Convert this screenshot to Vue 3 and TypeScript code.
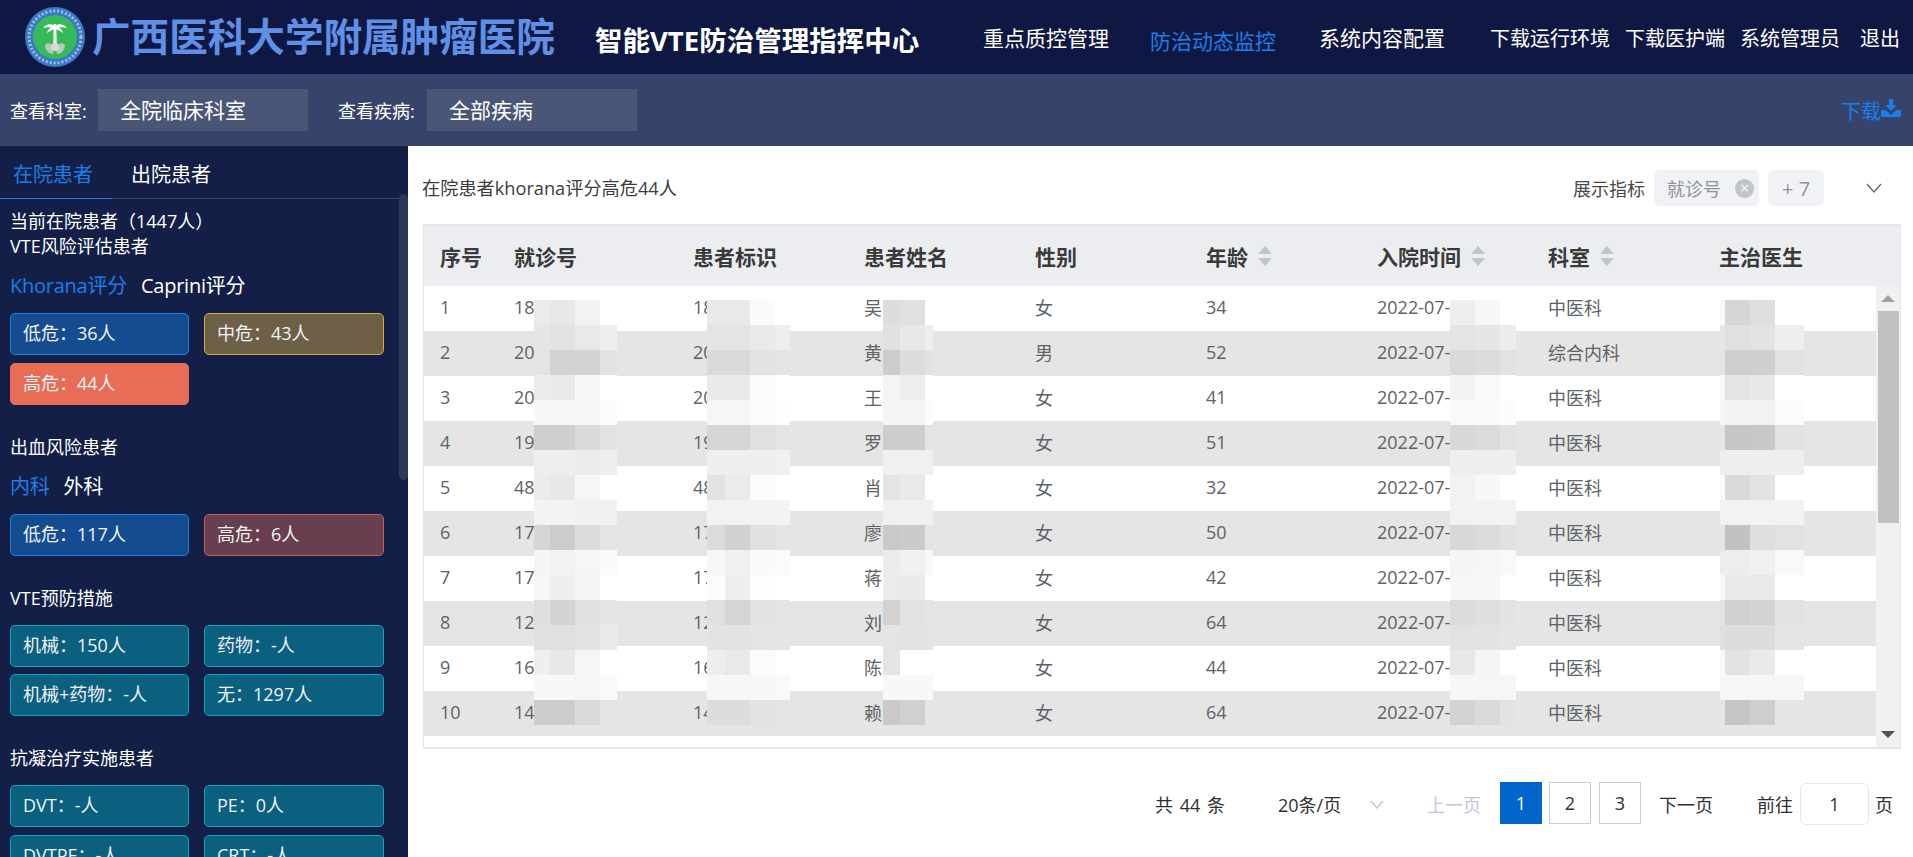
<script setup lang="ts">
interface Patient { no: string; id: string; name: string; sex: string; age: string; dept: string }
interface Mosaic { left: number; widths: number[]; data: string[] }

const patients: Patient[] = [
  { no: '18', id: '18', name: '吴', sex: '女', age: '34', dept: '中医科' },
  { no: '20', id: '20', name: '黄', sex: '男', age: '52', dept: '综合内科' },
  { no: '20', id: '20', name: '王', sex: '女', age: '41', dept: '中医科' },
  { no: '19', id: '19', name: '罗', sex: '女', age: '51', dept: '中医科' },
  { no: '48', id: '48', name: '肖', sex: '女', age: '32', dept: '中医科' },
  { no: '17', id: '17', name: '廖', sex: '女', age: '50', dept: '中医科' },
  { no: '17', id: '17', name: '蒋', sex: '女', age: '42', dept: '中医科' },
  { no: '12', id: '12', name: '刘', sex: '女', age: '64', dept: '中医科' },
  { no: '16', id: '16', name: '陈', sex: '女', age: '44', dept: '中医科' },
  { no: '14', id: '14', name: '赖', sex: '女', age: '64', dept: '中医科' },
]

const mosaics: Mosaic[] = [
  { left: 110, widths: [16, 25, 25, 17], data: ['eb e8 f2 ff','e6 e3 e9 ef','e4 d2 d4 e2','ec ea f8 ff','f8 f6 f8 fc','cf cf da e2','ee ee ec ee','ec e8 f6 ff','f3 f3 f1 f1','d6 cc dc e4','f5 f2 f6 fa','f6 ef f5 ff','de d4 e0 e6','e0 e0 e3 ea','ef e8 f6 ff','f8 f8 f6 f9','cc cc da e4'] },
  { left: 283, widths: [18, 25, 25, 15], data: ['e9 e9 fa ff','e4 e4 ea ee','da da e3 e4','ea ea fb ff','f6 f6 fb fd','d5 d5 e0 e4','ef ef ef f0','e2 eb fb ff','f2 f2 f2 f3','dc d1 e1 e5','f7 f0 fa fb','fb ee fd ff','e0 d5 e2 e5','e3 e3 e5 e5','ee e9 fb ff','f7 f7 f7 f9','dd dd e3 e5'] },
  { left: 459, widths: [17, 25, 8], data: ['dd e0 ff','e1 e8 ee','cd dd e1','f4 ee ff','f5 f5 fb','cd cd e4','f0 f0 f0','e4 e9 ff','f0 f0 f0','c9 cb e4','eb f0 f8','eb ea ff','d2 e2 e4','e4 e3 e4','e4 ff ff','f8 f8 f8','c9 d0 e5'] },
  { left: 1026, widths: [25, 25, 16], data: ['ee f7 ff','e4 e6 ec','da dc e2','f3 fa ff','f9 fa fc','d8 db e2','ef ef ef','f2 f8 ff','f2 f2 f2','d8 dc e1','f5 f6 f9','f8 f8 ff','dc de e3','e2 e3 e5','e8 f5 ff','f6 f6 f6','d2 da e3'] },
  { left: 1296, widths: [5, 25, 25, 29], data: ['f8 d6 df ff','e6 e0 e3 ee','e5 cf cf e2','f8 e4 e8 ff','f5 f2 f2 fb','e5 c6 c8 e2','ee ee ee ee','fa da e3 ff','f2 f2 f2 f2','e5 c2 df e2','ed ed f0 f9','f8 ea e9 ff','e3 d0 d3 e2','e0 dd dd e5','f8 e2 ea ff','f6 f6 f6 f6','e5 c5 ce e5'] },
]

const gridCols = (m: Mosaic) => m.widths.map((w) => w + 'px').join(' ')
const tiles = (m: Mosaic) => m.data.flatMap((r) => r.split(' ').map((v) => '#' + v + v + v))
</script>

<template>
  <div class="page">
    <header class="topbar">
      <svg class="logo" viewBox="0 0 60 60" aria-hidden="true">
        <circle cx="30" cy="30" r="30" fill="#3b78c6" />
        <circle cx="30" cy="30" r="26" fill="none" stroke="#9cc0e6" stroke-width="3" stroke-dasharray="2 2" />
        <circle cx="30" cy="30" r="22" fill="#36ba58" />
        <path d="M28.8 17h2.4l.6 22h-3.6z" fill="#fff" />
        <path d="M30 19c-4-3-9-2-12 2 4-1 8-1 11 1zM30 19c4-3 9-2 12 2-4-1-8-1-11 1zM29 20c-3 0-6 2-7 6 2-2 5-3 8-4zM31 20c3 0 6 2 7 6-2-2-5-3-8-4z" fill="#fff" />
        <path d="M20 38c3-3 6-2 9 2l-1 7c-4 0-8-4-8-9zM40 38c-3-3-6-2-9 2l1 7c4 0 8-4 8-9z" fill="#b9c9bd" />
        <circle cx="30" cy="40" r="4" fill="#d5dbd6" />
      </svg>
      <div class="hospital">广西医科大学附属肿瘤医院</div>
      <div class="system">智能VTE防治管理指挥中心</div>
      <nav class="nav">
        <span class="nav-main one">重点质控管理</span>
        <span class="nav-main active">防治动态监控</span>
        <span class="nav-main three">系统内容配置</span>
        <span class="nav-util first">下载运行环境</span>
        <span class="nav-util">下载医护端</span>
        <span class="nav-util">系统管理员</span>
        <span class="nav-util last">退出</span>
      </nav>
    </header>

    <section class="filters">
      <span class="flabel">查看科室:</span>
      <div class="fselect">全院临床科室</div>
      <span class="flabel second">查看疾病:</span>
      <div class="fselect">全部疾病</div>
      <div class="download">
        <span>下载</span>
        <svg class="dl-icon" viewBox="0 0 20 18" aria-hidden="true">
          <path d="M8 0h4v6h3.6L10 12 4.4 6H8z" fill="#1a7fe8" />
          <path d="M0 11h4.5l5.5 5 5.5-5H20v7H0z" fill="#1a7fe8" />
        </svg>
      </div>
    </section>

    <div class="body">
      <aside class="sidebar">
        <div class="tabs">
          <div class="tab active">在院患者</div>
          <div class="tab">出院患者</div>
        </div>
        <div class="side-content">
          <div class="title">当前在院患者（1447人）<br />VTE风险评估患者</div>
          <div class="switch"><span class="on">Khorana评分</span><span>Caprini评分</span></div>
          <div class="cards">
            <div class="card blue">低危：36人</div>
            <div class="card yellow">中危：43人</div>
            <div class="card red">高危：44人</div>
          </div>
          <div class="title gap-a">出血风险患者</div>
          <div class="switch"><span class="on">内科</span><span>外科</span></div>
          <div class="cards">
            <div class="card blue">低危：117人</div>
            <div class="card maroon">高危：6人</div>
          </div>
          <div class="title gap-a">VTE预防措施</div>
          <div class="cards wide">
            <div class="card teal">机械：150人</div>
            <div class="card teal">药物：-人</div>
            <div class="card teal">机械+药物：-人</div>
            <div class="card teal">无：1297人</div>
          </div>
          <div class="title gap-a">抗凝治疗实施患者</div>
          <div class="cards wide loose">
            <div class="card teal">DVT：-人</div>
            <div class="card teal">PE：0人</div>
            <div class="card teal">DVTPE：-人</div>
            <div class="card teal">CRT：-人</div>
          </div>
        </div>
        <div class="side-scroll"></div>
      </aside>

      <main class="main">
        <div class="toolbar">
          <div class="heading">在院患者khorana评分高危44人</div>
          <div class="metric">
            <span class="metric-label">展示指标</span>
            <span class="tag">就诊号<i class="tag-x">×</i></span>
            <span class="tag more">+ 7</span>
            <svg class="chev" viewBox="0 0 16 10" aria-hidden="true"><path d="M1 1l7 8 7-8" fill="none" stroke="#5f6368" stroke-width="1.2" /></svg>
          </div>
        </div>

        <div class="table">
          <div class="thead">
            <div class="th">序号</div>
            <div class="th">就诊号</div>
            <div class="th">患者标识</div>
            <div class="th">患者姓名</div>
            <div class="th">性别</div>
            <div class="th">年龄<svg class="sort" viewBox="0 0 14 20" aria-hidden="true"><path d="M7 0l7 8H0zM7 20l7-8H0z" fill="#c0c4cc" /></svg></div>
            <div class="th">入院时间<svg class="sort" viewBox="0 0 14 20" aria-hidden="true"><path d="M7 0l7 8H0zM7 20l7-8H0z" fill="#c0c4cc" /></svg></div>
            <div class="th">科室<svg class="sort" viewBox="0 0 14 20" aria-hidden="true"><path d="M7 0l7 8H0zM7 20l7-8H0z" fill="#c0c4cc" /></svg></div>
            <div class="th">主治医生</div>
          </div>
          <div class="tbody">
            <div class="rows">
              <div v-for="(p, i) in patients" :key="i" class="tr">
                <div class="td">{{ i + 1 }}</div>
                <div class="td">{{ p.no }}</div>
                <div class="td">{{ p.id }}</div>
                <div class="td">{{ p.name }}</div>
                <div class="td">{{ p.sex }}</div>
                <div class="td">{{ p.age }}</div>
                <div class="td">2022-07-</div>
                <div class="td">{{ p.dept }}</div>
                <div class="td"></div>
              </div>
              <div
                v-for="(m, k) in mosaics"
                :key="'m' + k"
                class="mosaic"
                :style="{ left: m.left + 'px', gridTemplateColumns: gridCols(m) }"
              >
                <div v-for="(c, t) in tiles(m)" :key="t" :style="{ background: c }"></div>
              </div>
            </div>
            <div class="vbar">
              <div class="arrow-box"><span class="tri up"></span></div>
              <div class="thumb"></div>
              <div class="vspace"></div>
              <div class="arrow-box"><span class="tri down"></span></div>
            </div>
          </div>
        </div>

        <div class="pager">
          <span class="total">共 44 条</span>
          <span class="size">20条/页</span>
          <svg class="size-chev" viewBox="0 0 14 9" aria-hidden="true"><path d="M1 1l6 7 6-7" fill="none" stroke="#c0c4cc" stroke-width="1.2" /></svg>
          <span class="prev">上一页</span>
          <span class="pg current">1</span>
          <span class="pg">2</span>
          <span class="pg">3</span>
          <span class="next">下一页</span>
          <span class="goto">前往</span>
          <span class="page-input">1</span>
          <span class="page-unit">页</span>
        </div>
      </main>
    </div>
  </div>
</template>

<style>
html, body { margin: 0; padding: 0; background: #fff; overflow: hidden; }
</style>

<style scoped>
.page {
  width: 1913px;
  height: 857px;
  overflow: hidden;
  display: flex;
  flex-direction: column;
  font-family: "Open Sans", "Noto Sans CJK SC", sans-serif;
  color: #fff;
}
.topbar {
  height: 74px;
  flex: none;
  background: #0f1842;
  display: flex;
  align-items: center;
}
.logo { width: 60px; height: 60px; margin-left: 25px; flex: none; }
.hospital {
  margin-left: 7px;
  margin-bottom: 6px;
  font-size: 38.6px;
  font-weight: 700;
  color: #5f90e6;
  white-space: nowrap;
}
.system {
  margin-left: 40px;
  margin-top: 4px;
  font-size: 27.5px;
  font-weight: 700;
  white-space: nowrap;
}
.nav {
  margin-left: auto;
  padding-right: 13px;
  display: flex;
  align-items: center;
  white-space: nowrap;
}
.nav-main { font-size: 21px; margin-right: 43px; }
.nav-main.one { margin-right: 41px; }
.nav-main.three { margin-right: 44px; }
.nav-main.active { color: #1a7fe8; margin-top: 6px; }
.nav-util { font-size: 20px; margin-left: 15px; }
.nav-util.first { margin-left: 1px; }
.nav-util.last { margin-left: 20px; }

.filters {
  height: 72px;
  flex: none;
  background: #36436b;
  display: flex;
  align-items: center;
  padding: 0 12px 0 10px;
}
.flabel { font-size: 18px; width: 88px; white-space: nowrap; }
.flabel.second { margin-left: 30px; width: 89px; }
.fselect {
  width: 188px;
  height: 42px;
  padding-left: 22px;
  background: #4a5676;
  font-size: 21px;
  line-height: 42px;
}
.download {
  margin-left: auto;
  display: flex;
  align-items: center;
  color: #1a7fe8;
  font-size: 20px;
}
.dl-icon { width: 20px; height: 18px; margin-bottom: 4px; }

.body { flex: 1; display: flex; min-height: 0; }
.sidebar {
  width: 408px;
  flex: none;
  background: #131f47;
  position: relative;
  overflow: hidden;
}
.tabs {
  height: 52px;
  display: flex;
  border-bottom: 1px solid #3b4566;
}
.tab { width: 112px; box-sizing: border-box; padding-left: 19px; line-height: 58px; font-size: 20px; margin-bottom: -1px; }
.tab.active { color: #1a7fe8; padding-left: 13px; border-bottom: 1px solid #1a7fe8; }
.side-content { padding: 10px 0 0 10px; width: 374px; }
.title { font-size: 18px; line-height: 25px; white-space: nowrap; }
.gap-a { margin-top: 30px; }
.switch { display: flex; gap: 14px; font-size: 20px; line-height: 30px; margin-top: 12px; white-space: nowrap; letter-spacing: -0.25px; }
.switch .on { color: #1a7fe8; }
.cards {
  display: grid;
  grid-template-columns: 179px 180px;
  column-gap: 15px;
  row-gap: 8px;
  margin-top: 12px;
}
.cards.wide { margin-top: 14px; row-gap: 7px; }
.cards.wide.loose { row-gap: 8px; }
.card {
  height: 42px;
  box-sizing: border-box;
  border: 1px solid;
  border-radius: 5px;
  padding-left: 12px;
  line-height: 39px;
  font-size: 18px;
  color: #f0f2f6;
  white-space: nowrap;
}
.blue { background: #154c8f; border-color: #1b83e4; }
.yellow { background: #6e6047; border-color: #dfa83d; }
.red { background: #e86d56; border-color: #e86d56; }
.maroon { background: #683f4e; border-color: #c95d52; }
.teal { background: #0b607f; border-color: #07a8c6; }
.side-scroll {
  position: absolute;
  left: 399px;
  top: 48px;
  width: 9px;
  height: 286px;
  border-radius: 5px;
  background: #2d3759;
}

.main { flex: 1; min-width: 0; background: #fff; color: #303133; }
.toolbar {
  height: 36px;
  margin-top: 24px;
  padding-left: 14px;
  display: flex;
  align-items: center;
}
.heading { font-size: 18.2px; color: #3c3c3c; white-space: nowrap; margin-bottom: 3px; }
.metric { margin-left: auto; display: flex; align-items: center; font-size: 18px; padding-right: 31px; }
.metric-label { color: #4a4a4a; margin-right: 9px; }
.tag {
  height: 36px;
  box-sizing: border-box;
  padding-left: 13px;
  width: 105px;
  display: flex;
  align-items: center;
  background: #f0f2f5;
  border-radius: 5px;
  color: #909399;
}
.tag-x {
  margin-left: 14px;
  width: 19px;
  height: 19px;
  border-radius: 50%;
  background: #c0c4cc;
  color: #fff;
  font-size: 16px;
  font-style: normal;
  line-height: 18px;
  text-align: center;
}
.tag.more { width: 56px; margin-left: 9px; padding-left: 14px; font-size: 20px; }
.chev { width: 16px; height: 10px; margin-left: 42px; }

.table {
  margin: 18px 12px 0 15px;
  border: 1px solid #e6e6e6;
  border-top-width: 2px;
  border-bottom-width: 2px;
  box-sizing: border-box;
  width: 1478px;
  height: 525px;
}
.thead, .tr {
  display: grid;
  grid-template-columns: 74px 179px 171px 171px 171px 171px 171px 171px auto;
}
.thead { height: 60px; background: #ebedf1; align-items: center; }
.th {
  padding-left: 16px;
  font-size: 21px;
  font-weight: 700;
  color: #3a3a3a;
  display: flex;
  align-items: center;
  white-space: nowrap;
}
.sort { width: 14px; height: 20px; margin-left: 10px; }
.tbody { display: flex; height: 461px; }
.rows { position: relative; flex: 1; min-width: 0; overflow: hidden; }
.tr { height: 45px; align-items: center; }
.tr:nth-child(even) { background: #e5e5e5; }
.td { padding: 0 0 3px 16px; font-size: 18px; color: #606266; white-space: nowrap; }
.mosaic {
  position: absolute;
  top: 14px;
  display: grid;
  grid-auto-rows: 25px;
}
.vbar {
  width: 24px;
  flex: none;
  background: #f1f1f1;
  display: flex;
  flex-direction: column;
  align-items: center;
}
.arrow-box { height: 25px; flex: none; display: flex; align-items: center; justify-content: center; }
.tri { width: 0; height: 0; border-left: 7px solid transparent; border-right: 7px solid transparent; }
.tri.up { border-bottom: 7px solid #a3a3a3; }
.tri.down { border-top: 7px solid #505050; }
.thumb { width: 21px; height: 212px; background: #c1c1c1; flex: none; }
.vspace { flex: 1; }

.pager {
  margin-top: 33px;
  height: 44px;
  display: flex;
  align-items: center;
  font-size: 18px;
  color: #303133;
  white-space: nowrap;
}
.total { margin-left: 747px; width: 123px; word-spacing: 2px; }
.size { width: 92px; }
.size-chev { width: 14px; height: 9px; margin-right: 43px; }
.prev { color: #c0c8da; width: 73px; }
.pg {
  width: 42px;
  height: 42px;
  box-sizing: border-box;
  border: 1px solid #ccc;
  text-align: center;
  line-height: 40px;
  margin-right: 8px;
  margin-bottom: 2px;
}
.pg.current { background: #0066cc; border-color: #0066cc; color: #fff; margin-right: 7px; }
.next { margin-left: 10px; width: 98px; }
.goto { width: 43px; }
.page-input {
  width: 69px;
  height: 42px;
  box-sizing: border-box;
  border: 1px solid #e4e7ed;
  border-radius: 6px;
  text-align: center;
  line-height: 40px;
}
.page-unit { margin-left: 6px; }
</style>
